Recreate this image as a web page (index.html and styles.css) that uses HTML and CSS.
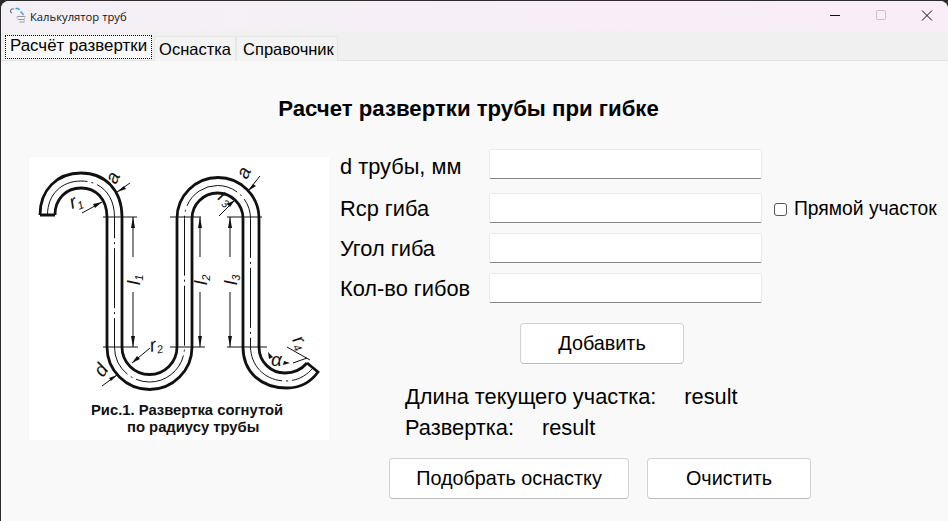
FILE: index.html
```html
<!DOCTYPE html>
<html lang="ru">
<head>
<meta charset="UTF-8">
<title>Калькулятор труб</title>
<link rel="stylesheet" href="styles.css">
</head>

<body>

<div class="window">

<div class="titlebar">
    <svg class="app-icon" width="18" height="18" viewBox="0 0 18 18" fill="none">
        <path d="M5 2H2.500L1.500 3.500V5L3 6" stroke="#6f7880" stroke-width="1.100"/>
        <path d="M6.500 1.500H9L10.500 3M11.500 4.500L13 6L14.500 8" stroke="#3c9ed6" stroke-width="1.300"/>
        <path d="M8 9.500H16.500M9 12.500H15M10.500 15H15.500" stroke="#8f99a3" stroke-width="1"/>
        <path d="M8 9.500V11L9 12.500M15.500 9.500V13L15 15" stroke="#c3c9ce" stroke-width="1"/>
    </svg>
    <span class="app-title">Калькулятор труб</span>
    <div class="win-buttons">
        <svg width="46" height="30" viewBox="0 0 46 30"><path d="M18 14.500h10" stroke="#111" stroke-width="1"/></svg>
        <svg width="46" height="30" viewBox="0 0 46 30"><rect x="18.500" y="9.500" width="9" height="9" rx="1" fill="none" stroke="#c6c2c8"/></svg>
        <svg width="46" height="30" viewBox="0 0 46 30"><path d="M18 9.500l10 10M28 9.500l-10 10" stroke="#111" stroke-width="1"/></svg>
    </div>
</div>

<div class="tabs">
    <div class="tab active">Расчёт развертки</div>
    <div class="tab">Оснастка</div>
    <div class="tab">Справочник</div>
</div>

<div class="page">
    <h1 class="heading">Расчет развертки трубы при гибке</h1>

    <div class="content">
        <svg class="figure" width="300" height="283" viewBox="0 0 300 283" fill="none" stroke="#111">
            <rect width="300" height="283" fill="#fff" stroke="none"/>

            <!-- труба -->
            <g stroke-width="2.800">
                <path d="M26 58C26 42 37 31 52 31C67 31 78 42 78 60V190A42.500 42.500 0 0 0 163 190V61.500A25.500 25.500 0 0 1 214 61.500V190C214 215 232 231 258 231C270 231 281 226 289 215L278 206"/>
                <path d="M11 58C11 33 28 16 52 16C76 16 93 33 93 60V190A27.500 27.500 0 0 0 148 190V61.500A41 41 0 0 1 230 61.500V190C230 205 242 216 256 216C264 216 272 213 278 206"/>
                <path d="M11 58H26" stroke-width="3"/>
            </g>

            <!-- осевая -->
            <path stroke-width="1" stroke-dasharray="60 4 2 4" d="M18.500 58C18.500 37 33 24 52 24C71 24 85.500 37 85.500 60V190A35 35 0 0 0 155.500 190V61.500A33 33 0 0 1 221.500 61.500V190C222 210 237 224 257 224C268 224 277 219 284 211"/>

            <!-- размеры -->
            <g stroke-width="1">
                <path d="M74 60H108M74 190H109M141 190H176M141 60H172M198 60H233M198 190H238"/>
                <path d="M104 60V100M104 135V190M171 60V100M171 135V190M201 60V100M201 135V190"/>
                <path d="M88 35L101 26M53 56L73 45M219 34L231 19M190 59L206 43"/>
                <path d="M103 206L121 191M73 229L88 218M258 190L281 203M264 206L278 201"/>
            </g>
            <g fill="#111" stroke="none">
                <path d="M104 60l-2 11h4zM104 190l-2 -11h4zM171 60l-2 11h4zM171 190l-2 -11h4zM201 60l-2 11h4zM201 190l-2 -11h4z"/>
                <path d="M88 35l7 -6 2 3zM73 45l-9 2 2 4zM219 34l5 -7 3 2zM206 43l-8 4 3 3zM103 206l8 -4 -3 -3zM88 218l-8 3 2 3zM239 195l5 5 -4 2zM261 206l-7 2 1 -4z"/>
            </g>

            <g class="fig-label" fill="#111" stroke="none">
                <text x="43" y="52" transform="rotate(-20 43 52)">r<tspan class="fig-sub" dy="3">1</tspan></text>
                <text x="87" y="28" transform="rotate(-65 87 28)">a</text>
                <text x="218" y="23" transform="rotate(-65 218 23)">a</text>
                <text x="122" y="195" transform="rotate(-12 122 195)">r<tspan class="fig-sub" dy="3">2</tspan></text>
                <text x="188" y="42" transform="rotate(35 188 42)">r<tspan class="fig-sub" dy="3">3</tspan></text>
                <text x="74" y="221" transform="rotate(-55 74 221)">d</text>
                <text x="242" y="209">α</text>
                <text x="263" y="183" transform="rotate(60 263 183)">r<tspan class="fig-sub" dy="3">4</tspan></text>
                <text x="111" y="128" transform="rotate(-90 111 128)">l<tspan class="fig-sub" dy="3">1</tspan></text>
                <text x="178" y="128" transform="rotate(-90 178 128)">l<tspan class="fig-sub" dy="3">2</tspan></text>
                <text x="208" y="128" transform="rotate(-90 208 128)">l<tspan class="fig-sub" dy="3">3</tspan></text>
            </g>

            <g class="fig-caption" fill="#111" stroke="none">
                <text x="62" y="258">Рис.1. Развертка согнутой</text>
                <text x="98" y="275">по радиусу трубы</text>
            </g>
        </svg>

        <div class="form">
            <div class="field first-field">
                <label>d трубы, мм</label>
                <input type="text">
            </div>
            <div class="field">
                <label>Rcp гиба</label>
                <input type="text">
                <label class="check"><input type="checkbox">Прямой участок</label>
            </div>
            <div class="field">
                <label>Угол гиба</label>
                <input type="text">
            </div>
            <div class="field">
                <label>Кол-во гибов</label>
                <input type="text">
            </div>

            <button class="btn add-btn">Добавить</button>

            <div class="results">
                <div class="result-row"><span>Длина текущего участка:</span><span>result</span></div>
                <div class="result-row"><span>Развертка:</span><span>result</span></div>
            </div>

            <div class="actions">
                <button class="btn pick-btn">Подобрать оснастку</button>
                <button class="btn clear-btn">Очистить</button>
            </div>
        </div>
    </div>
</div>

</div>

</body>
</html>
```

FILE: styles.css
```css
html, body {
    margin: 0;
    height: 100%;
    background: #2b2b2b;
}

body {
    font-family: "Liberation Sans", Arial, sans-serif;
    color: #000;
    overflow: hidden;
}

.window {
    height: 520px;
    margin-top: 1px;
    margin-left: 1px;
    border-radius: 8px 8px 0 0;
    overflow: hidden;
    background: #f9f9f9;
    display: flex;
    flex-direction: column;
}

.titlebar {
    height: 30px;
    display: flex;
    align-items: center;
    background: linear-gradient(90deg, #f4f0f6, #f9edf8);
}

.app-icon {
    margin-left: 8px;
    margin-bottom: 1px;
}

.app-title {
    margin-left: 3px;
    font-family: "Open Sans", sans-serif;
    font-size: 11.250px;
    color: #111;
}

.win-buttons {
    margin-left: auto;
    margin-right: -2px;
    display: flex;
}

.tabs {
    height: 30px;
    display: flex;
    align-items: flex-end;
    padding-left: 4px;
    background: #f0f0f0;
    border-bottom: 1px solid #e4e4e4;
    box-sizing: border-box;
}

.tab {
    height: 24px;
    padding: 0 4px;
    font-size: 16.500px;
    line-height: 25px;
    background: #f3f3f3;
    border: 1px solid #e6e6e6;
    border-bottom: none;
    margin-bottom: -1px;
}

.tab:last-child {
    padding: 0 3px 0 6px;
}

.tab.active {
    height: 24px;
    margin-bottom: 1px;
    margin-right: 2px;
    font-size: 16.900px;
    line-height: 21px;
    background: #f9f9f9;
    outline: 1px dotted #000;
    outline-offset: -1px;
    border: none;
    padding: 0 5px;
}

.heading {
    margin: 0;
    padding: 36px 12px 0 0;
    height: 52px;
    text-align: center;
    font-size: 22.200px;
    line-height: 24px;
    font-weight: bold;
}

.content {
    display: flex;
    align-items: flex-start;
}

.figure {
    margin-left: 28px;
    margin-top: 8px;
    flex: none;
}

.fig-label {
    font-family: "Liberation Sans", sans-serif;
    font-style: italic;
    font-size: 19px;
}

.fig-sub {
    font-size: 11px;
}

.fig-caption {
    font-family: "Liberation Sans", sans-serif;
    font-weight: bold;
    font-size: 14.800px;
}

.form {
    margin-left: 11px;
    font-size: 21.800px;
}

.field {
    display: flex;
    align-items: center;
    height: 30px;
    margin-bottom: 10px;
}

.first-field {
    margin-bottom: 14px;
}

.field > label:first-child {
    width: 149px;
    flex: none;
    padding-top: 2px;
}

.first-field > label:first-child {
    padding-top: 6px;
}

.field input[type="text"] {
    width: 273px;
    height: 30px;
    box-sizing: border-box;
    border: 1px solid #eaeaea;
    border-bottom: 1px solid #858585;
    border-radius: 2px;
    background: #fff;
    padding: 0 6px;
}

.check {
    display: flex;
    align-items: center;
    margin-left: 12px;
    padding-top: 2px;
    font-size: 19.300px;
    white-space: nowrap;
}

.check input {
    width: 13px;
    height: 13px;
    margin: 0 7px 0 0;
    appearance: none;
    background: #fff;
    border: 1px solid #555;
    border-radius: 3px;
    box-sizing: border-box;
}

.btn {
    display: block;
    height: 41px;
    box-sizing: border-box;
    font-family: inherit;
    font-size: 19.800px;
    color: #000;
    background: #fff;
    border: 1px solid #d2d2d2;
    border-bottom-color: #bcbcbc;
    border-radius: 4px;
}

.add-btn {
    width: 164px;
    margin: 20px 0 0 180px;
}

.results {
    margin: 20px 0 0 65px;
}

.result-row {
    display: flex;
    gap: 28px;
    height: 31px;
    line-height: 26px;
}

.actions {
    display: flex;
    gap: 18px;
    margin: 12px 0 0 49px;
}

.pick-btn {
    width: 240px;
}

.clear-btn {
    width: 164px;
}
```
